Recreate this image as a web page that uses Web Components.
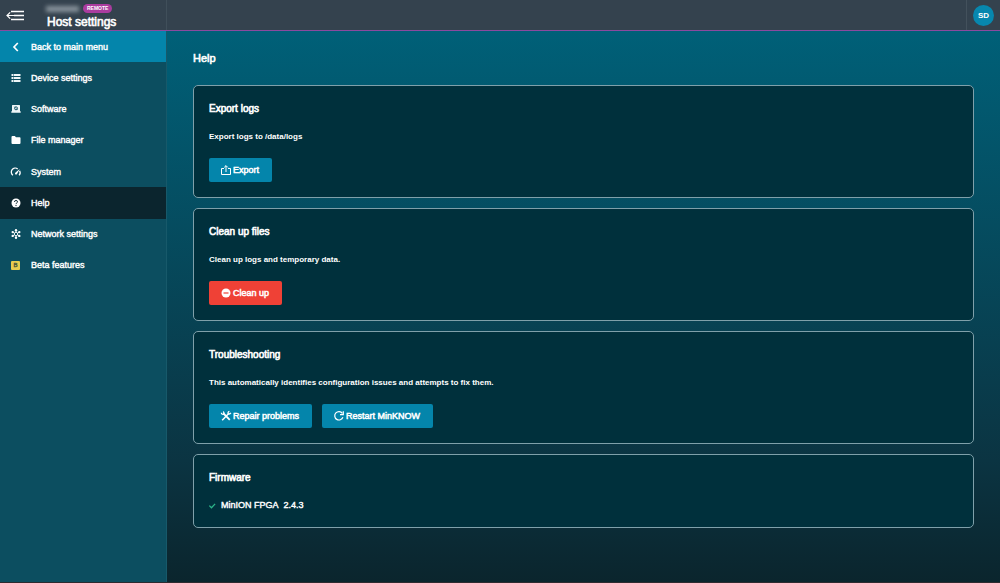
<!DOCTYPE html>
<html lang="en">
<head>
<meta charset="utf-8">
<title>Host settings</title>
<style>
html, body { height: 100%; margin: 0; }
body { font-family: "Liberation Sans", Arial, sans-serif; font-weight: 400; -webkit-text-stroke: 0.4px; color: #fff; background: #0b272f; }
</style>
</head>
<body>
<host-app></host-app>
<script>
const ICONS = {
  menu: '<g fill="none" stroke="#fff" stroke-width="1.6"><path d="M5 1.5H18M8 5.5H18M5 9.5H18"/><path d="M8 5.5H1M4.2 2.4 1 5.5l3.2 3.1" stroke-width="1.2"/></g>',
  back: '<path d="M7.8 2 4 6l3.800 4" fill="none" stroke="#fff" stroke-width="1.7"/>',
  device: '<path d="M1.500 2h2v2h-2zM1.500 5h2v2h-2zM1.500 8h2v2h-2zM4 2h6.500v2H4zM4 5h6.500v2H4zM4 8h6.500v2H4z" fill="#eef6f8"/>',
  software: '<path fill-rule="evenodd" d="M2.6 2h6.8q.6 0 .6.6v5.6h.7V9.700H1.300V8.200H2V2.600Q2 2 2.600 2z" fill="#eef6f8"/><circle cx="6" cy="5.300" r="1.500" fill="none" stroke="#0c4e60" stroke-width=".9"/><path d="M4.300 3.600 7.700 7" stroke="#0c4e60" stroke-width=".6"/>',
  folder: '<path d="M1.500 3q0-1 1-1h2.300l1.200 1.200h3.700q.8 0 .8.800V9q0 1-1 1h-7q-1 0-1-1z" fill="#fff"/>',
  gauge: '<g fill="none" stroke="#fff" stroke-width="1.300"><path d="M2.900 9.300A4 4 0 0 1 7.700 2.900M9.600 4.700a4 4 0 0 1-.5 4.600"/></g><path d="M9.800 3 6.900 8.200Q6 9 5.200 8.200q-.6-.9.300-1.600z" fill="#fff"/>',
  help: '<circle cx="6" cy="6" r="4.500" fill="#fff"/><path d="M4.400 4.900Q4.500 3.500 6 3.500t1.500 1.300Q7.500 5.500 6.700 6 6 6.400 6 7.100M6 8v1.100" fill="none" stroke="#0b252e" stroke-width="1"/>',
  network: '<g stroke="#fff" stroke-width=".9" fill="none"><circle cx="6" cy="6" r="1.700"/><path d="M6 2v2.300M6 7.700V10M2.500 4l2 1.200M7.500 6.800l2 1.200M9.500 4l-2 1.200M4.500 6.800l-2 1.200"/></g><g fill="#fff"><circle cx="6" cy="2.200" r="1.200"/><circle cx="6" cy="9.800" r="1.200"/><circle cx="2.700" cy="4.100" r="1.200"/><circle cx="9.300" cy="4.100" r="1.200"/><circle cx="2.700" cy="7.900" r="1.200"/><circle cx="9.300" cy="7.900" r="1.200"/></g>',
  export: '<g fill="none" stroke="#fff" stroke-width="1"><path d="M4 4.500H1.500v6h9v-6H8M6 8V1.800M4.200 3.400 6 1.600l1.800 1.800"/></g>',
  clean: '<circle cx="6" cy="6" r="4.500" fill="#fff"/><path d="M3.500 6h5" stroke="#ef4136" stroke-width="1.200"/>',
  repair: '<g stroke="#fff" fill="none"><path d="M3.500 3.500 9.800 9.800" stroke-width="1.800"/><path d="M2.200 10.200 8.500 3.800" stroke-width="1.500"/><path d="M1.400 2.800q0 1.700 2 1.500Q4.600 3 3.300 1.500M9.400 1.300Q7.600 1.900 8.200 3.700q1.500 1 2.700-.8" stroke-width="1.300"/></g>',
  restart: '<path d="M9.900 7.200A4.200 4.200 0 1 1 9.400 3.400" fill="none" stroke="#fff" stroke-width="1.200"/><path d="M10.300 1.300v3.400H7" fill="none" stroke="#fff" stroke-width="1.200"/>',
  check: '<path d="M1.800 6.200 4.600 9l4.900-5.200" fill="none" stroke="#2bb58a" stroke-width="1.700"/>'
};

function define(name, render) {
  customElements.define(name, class extends HTMLElement {
    connectedCallback() {
      if (this.shadowRoot) return;
      const template = document.createElement('template');
      template.innerHTML = render(this);
      this.attachShadow({ mode: 'open' }).append(template.content.cloneNode(true));
    }
  });
}

define('ui-icon', el => {
  const name = el.getAttribute('name');
  const box = name === 'menu' ? '0 0 19 11' : '0 0 12 12';
  return `<style>
    :host { display: block; flex: none; width: 12px; height: 12px; }
    :host([name=menu]) { width: 19px; height: 11px; }
    svg { display: block; width: 100%; height: 100%; }
  </style><svg viewBox="${box}" aria-hidden="true">${ICONS[name]}</svg>`;
});

define('app-header', () => `<style>
    :host { display: flex; height: 30px; background: #34424e; border-bottom: 1px solid #8b4a9f; }
    .left { box-sizing: border-box; width: 167px; display: flex; border-right: 1px solid #404f5a; }
    button { border: 0; background: none; margin: 0; padding: 0 0 0 6px; width: 46px; display: flex; align-items: center; }
    .host { display: flex; align-items: center; gap: 4px; height: 9px; padding-top: 4px; }
    .name { width: 33px; height: 6px; background: #87919a; filter: blur(2px); }
    .tag { height: 9px; line-height: 9px; padding: 0 4px; border-radius: 5px; background: #aa3c9f; font-size: 5px; font-weight: 700; -webkit-text-stroke: 0; }
    h1 { margin: 1px 0 0 1px; font-size: 12px; font-weight: 400; -webkit-text-stroke: 0.6px; line-height: 16px; }
    .right { margin-left: auto; width: 34px; box-sizing: border-box; border-left: 1px solid #43515c; display: flex; align-items: center; justify-content: center; }
    .avatar { width: 21px; height: 21px; line-height: 21px; border-radius: 50%; text-align: center; background: #0787ae; font-size: 8px; font-weight: 700; -webkit-text-stroke: 0; }
  </style>
  <div class="left">
    <button type="button" aria-label="Collapse menu"><ui-icon name="menu"></ui-icon></button>
    <div><div class="host"><span class="name"></span><span class="tag">REMOTE</span></div><h1>Host settings</h1></div>
  </div>
  <div class="right"><div class="avatar">SD</div></div>`);

define('nav-item', el => `<style>
    :host { display: block; }
    a { height: 100%; display: flex; align-items: center; gap: 9px; padding-left: 10px; color: #fff; text-decoration: none; font-size: 9px; line-height: 12px; }
    :host([kind=back]) a { background: #0485ab; }
    :host([kind=current]) a { background: #0b252e; }
    .beta { width: 9px; height: 9px; margin: 0 2px 0 1px; border-radius: 1px; background: #e6cc4f; color: #4d5a3c; font-size: 6px; line-height: 9px; text-align: center; }
  </style>
  <a href="#">${el.hasAttribute('icon') ? `<ui-icon name="${el.getAttribute('icon')}"></ui-icon>` : '<span class="beta">B</span>'}<slot></slot></a>`);

define('side-nav', () => `<style>
    :host { display: block; box-sizing: border-box; width: 167px; background: #0c4e60; border-right: 1px solid #17596a; }
    nav { display: grid; grid-auto-rows: 1fr; height: 250px; }
  </style><nav><slot></slot></nav>`);

define('action-button', el => `<style>
    :host { display: block; }
    button { display: flex; align-items: center; gap: 1px; height: 24px; margin: 0; padding: 0 13px 0 11px; border: 0; border-radius: 2px; background: #0485ab; color: #fff; font: inherit; font-size: 9px; line-height: 12px; -webkit-text-stroke: 0.5px; }
    :host([danger]) button { background: #ef4136; }
  </style>
  <button type="button"><ui-icon name="${el.getAttribute('icon')}"></ui-icon><slot></slot></button>`);

define('settings-card', el => `<style>
    :host { display: block; border: 1px solid #7fa0aa; border-radius: 5px; background: #00303c; padding: 15px; }
    h2 { margin: 0; font-size: 10px; font-weight: 400; -webkit-text-stroke: 0.6px; line-height: 15px; }
    .body { margin-top: 13px; font-size: 8px; font-weight: 700; -webkit-text-stroke: 0; line-height: 15px; }
    .actions { display: flex; gap: 10px; margin-top: 14px; }
    :host([plain]) .actions { display: none; }
    :host([plain]) .body { font-size: 9px; font-weight: 400; -webkit-text-stroke: 0.4px; line-height: 14px; }
  </style>
  <h2>${el.getAttribute('heading')}</h2>
  <div class="body"><slot></slot></div>
  <div class="actions"><slot name="actions"></slot></div>`);

define('firmware-row', el => `<style>
    :host { display: flex; align-items: center; font-weight: 400; -webkit-text-stroke: 0.4px; }
    ui-icon { width: 9px; height: 9px; margin: 0 4px 0 -1px; }
    .version { margin-left: 5px; }
  </style><ui-icon name="check"></ui-icon><span><slot></slot></span><span class="version">${el.getAttribute('version')}</span>`);

define('host-app', () => `<style>
    :host { display: flex; flex-direction: column; min-height: 100vh; }
    .content { flex: 1; display: flex; }
    main { flex: 1; min-width: 0; padding: 19px 26px; background: linear-gradient(#006078, #0b3442 78%, #0b252d); }
    h1 { margin: 0; font-size: 11px; font-weight: 400; -webkit-text-stroke: 0.6px; line-height: 16px; }
    .cards { display: grid; gap: 10px; margin-top: 19px; }
    .foot { height: 1px; background: #2e2b30; }
  </style>
  <app-header></app-header>
  <div class="content">
    <side-nav>
      <nav-item kind="back" icon="back">Back to main menu</nav-item>
      <nav-item icon="device">Device settings</nav-item>
      <nav-item icon="software">Software</nav-item>
      <nav-item icon="folder">File manager</nav-item>
      <nav-item icon="gauge">System</nav-item>
      <nav-item kind="current" icon="help">Help</nav-item>
      <nav-item icon="network">Network settings</nav-item>
      <nav-item>Beta features</nav-item>
    </side-nav>
    <main>
      <h1>Help</h1>
      <div class="cards">
        <settings-card heading="Export logs">Export logs to /data/logs
          <action-button slot="actions" icon="export">Export</action-button></settings-card>
        <settings-card heading="Clean up files">Clean up logs and temporary data.
          <action-button slot="actions" icon="clean" danger>Clean up</action-button></settings-card>
        <settings-card heading="Troubleshooting">This automatically identifies configuration issues and attempts to fix them.
          <action-button slot="actions" icon="repair">Repair problems</action-button>
          <action-button slot="actions" icon="restart">Restart MinKNOW</action-button></settings-card>
        <settings-card heading="Firmware" plain><firmware-row version="2.4.3">MinION FPGA</firmware-row></settings-card>
      </div>
    </main>
  </div>
  <div class="foot"></div>`);
</script>
</body>
</html>
